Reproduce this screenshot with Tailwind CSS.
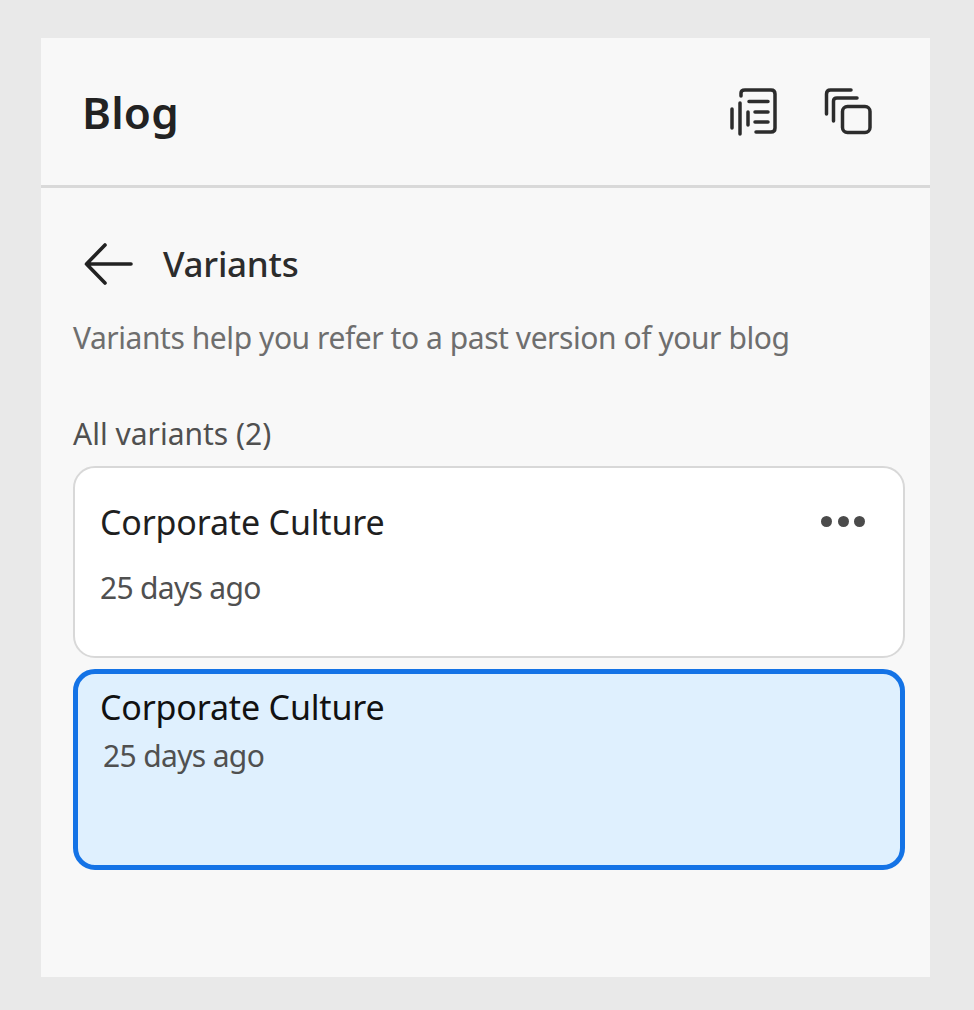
<!DOCTYPE html>
<html lang="en">
<head>
  <meta charset="UTF-8">
  <title>Blog variants</title>
  <script src="https://cdn.jsdelivr.net/npm/@tailwindcss/browser@4"></script>
</head>
<body class="bg-[#e9e9e9] font-['Noto_Sans',sans-serif]">
  <div class="w-[974px] h-[1010px] pt-[38px] pl-[41px]">
    <div class="w-[889px] h-[939px] bg-[#f8f8f8]">
      <!-- header -->
      <div class="h-[150px] flex items-center justify-between pl-[41px] pr-[56px] border-b-[3px] border-[#d9d9d9]">
        <h1 class="text-[44px] leading-[60px] font-semibold text-[#222222] tracking-[0.2px]">Blog</h1>
        <div class="flex items-center gap-[45px]">
          <svg class="w-[50px] h-[50px]" viewBox="0 0 50 50" fill="none" stroke="#2c2c2c" stroke-width="3.500" stroke-linecap="round" stroke-linejoin="round">
            <path d="M12 9V6Q12 3 16 3H42Q46 3 46 7V41Q46 45 42 45H27"/>
            <path d="M20 14.500H39M26 25H39M26 35H39"/>
            <path d="M3 22V41M11 16V47M19 25V38"/>
          </svg>
          <svg class="w-[50px] h-[50px]" viewBox="0 0 50 50" fill="none" stroke="#2c2c2c" stroke-width="3.500" stroke-linecap="round" stroke-linejoin="round">
            <rect x="18.500" y="19.500" width="27.500" height="26" rx="5"/>
            <path d="M9.500 34V14Q9.500 11 13 11H33"/>
            <path d="M2.500 27V7Q2.500 3 6.500 3H27"/>
          </svg>
        </div>
      </div>
      <!-- body -->
      <div class="pl-[32px] pr-[25px] pt-[37px]">
        <div class="flex items-center h-[78px] pl-[11px]">
          <svg class="w-[50px] h-[44px]" viewBox="0 0 50 44" fill="none" stroke="#222222" stroke-width="3.600" stroke-linecap="round" stroke-linejoin="round">
            <path d="M2.500 22H47M21 3L2.500 22L21 41"/>
          </svg>
          <span class="ml-[29px] text-[35px] leading-[44px] font-medium text-[#2c2c2c] tracking-[-0.25px]">Variants</span>
        </div>
        <p class="mt-[14px] text-[30px] leading-[42px] text-[#6e6e6e] tracking-[-0.44px] whitespace-nowrap">Variants help you refer to a past version of your blog</p>
        <p class="mt-[55px] text-[30px] leading-[40px] text-[#505050]">All variants (2)</p>
        <div class="mt-[12px] h-[192px] rounded-[22px] bg-white border-2 border-[#d8d8d8] pl-[25px] pr-[38px] pt-[30px]">
          <div class="flex items-center justify-between h-[48px]">
            <span class="text-[34px] leading-[48px] text-[#1f1f1f] tracking-[-0.17px]">Corporate Culture</span>
            <span class="flex gap-[5.500px] -mt-[1px]">
              <i class="block w-[11px] h-[11px] rounded-full bg-[#4b4b4b]"></i>
              <i class="block w-[11px] h-[11px] rounded-full bg-[#4b4b4b]"></i>
              <i class="block w-[11px] h-[11px] rounded-full bg-[#4b4b4b]"></i>
            </span>
          </div>
          <p class="mt-[21px] text-[30px] leading-[42px] text-[#505050] tracking-[-0.7px]">25 days ago</p>
        </div>
        <div class="mt-[11px] h-[201px] rounded-[22px] bg-[#dff0fe] border-[5px] border-[#1473e6] pl-[22px] pt-[9px]">
          <p class="text-[34px] leading-[48px] text-[#111111] tracking-[-0.17px]">Corporate Culture</p>
          <p class="ml-[3px] mt-[1px] text-[30px] leading-[48px] text-[#505050] tracking-[-0.65px]">25 days ago</p>
        </div>
      </div>
    </div>
  </div>
</body>
</html>
